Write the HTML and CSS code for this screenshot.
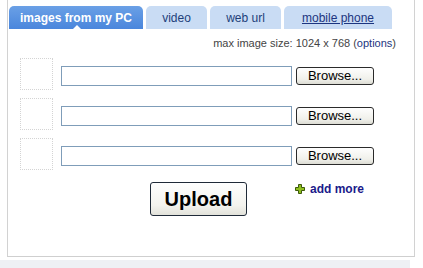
FILE: index.html
```html
<!DOCTYPE html>
<html>
<head>
<meta charset="utf-8">
<link rel="stylesheet" href="styles.css">
</head>
<body>
<div class="panel">
  <div class="tabs">
    <div class="tab active t1">images from my PC<span class="notch"></span></div>
    <div class="tab t2">video</div>
    <div class="tab t3">web url</div>
    <div class="tab t4"><span class="u">mobile phone</span></div>
  </div>
  <div class="info">max image size: 1024 x 768 (<span class="opt">options</span>)</div>
  <div class="rows">
    <div class="row"><div class="thumb"></div><div class="field"></div><div class="browse">Browse...</div></div>
    <div class="row"><div class="thumb"></div><div class="field"></div><div class="browse">Browse...</div></div>
    <div class="row"><div class="thumb"></div><div class="field"></div><div class="browse">Browse...</div></div>
  </div>
  <div class="actions">
    <div class="upload">Upload</div>
    <div class="more"><svg class="plus" width="10" height="10" viewBox="0 0 10 10"><path d="M3.5 0.5h3v3h3v3h-3v3h-3v-3h-3v-3h3z" fill="#8fbf1f" stroke="#3d5a0a" stroke-width="1"/></svg><span>add more</span></div>
  </div>
</div>
<div class="band"></div>
</body>
</html>
```
FILE: styles.css
```css
html, body { margin: 0; padding: 0; background: #fff; }
body { font-family: "Liberation Sans", Arial, sans-serif; width: 423px; height: 268px; overflow: hidden; }
.panel {
  margin-left: 7px;
  width: 406px;
  height: 256px;
  border-left: 1px solid #d2d2d2;
  border-right: 1px solid #d2d2d2;
  border-bottom: 1px solid #cfcfcf;
}
.tabs { display: flex; gap: 3px; padding: 6px 0 0 1px; height: 23px; }
.tab {
  position: relative;
  height: 23px;
  line-height: 24px;
  font-size: 12px;
  text-align: center;
  color: #1e3f7a;
  background: #c9dcf4;
  border-radius: 5px 5px 0 0;
}
.t1 { width: 134px; }
.t2 { width: 61px; }
.t3 { width: 71px; }
.t4 { width: 108px; }
.active { background: linear-gradient(#6aa0e6, #4a86dc); color: #fff; font-weight: bold; }
.u { text-decoration: underline; color: #1c3580; }
.notch {
  position: absolute; left: 64px; bottom: 0;
  width: 0; height: 0;
  border-left: 4px solid transparent; border-right: 4px solid transparent;
  border-bottom: 4px solid #fff;
}
.info { font-size: 11px; color: #444; text-align: right; padding: 8px 18px 0 0; height: 13px; line-height: 13px; }
.opt { color: #1c3580; }
.rows { padding-top: 7px; display: flex; flex-direction: column; gap: 8px; }
.row { display: flex; align-items: flex-start; height: 32px; padding-left: 12px; }
.thumb { width: 31px; height: 30px; border: 1px dotted #d4d4d4; margin-top: 1px; }
.field { width: 229px; height: 18px; border: 1px solid #7f9db9; margin: 9px 0 0 8px; background: #fff; }
.browse {
  width: 76px; height: 16px; margin: 10px 0 0 4px;
  border: 1px solid #2a2a2a; border-radius: 3px;
  background: linear-gradient(#fefefe, #f0f0ea 70%, #dcdcd4);
  font-size: 13px; line-height: 16px; text-align: center; color: #000;
}
.actions { display: flex; align-items: flex-start; padding-left: 142px; padding-top: 13px; }
.upload {
  width: 95px; height: 32px; border: 1px solid #1f2a38; border-radius: 3px;
  background: linear-gradient(#fefefe, #f3f3ee 70%, #e2e2da);
  font-size: 20px; font-weight: bold; line-height: 32px; text-align: center; color: #000;
}
.more { display: flex; align-items: center; margin: 0 0 0 48px; font-size: 12px; font-weight: bold; color: #1a1a8a; gap: 5px; }
.plus { display: block; }
.band { margin-top: 3px; height: 9px; background: #eef0f4; width: 410px; }
```
